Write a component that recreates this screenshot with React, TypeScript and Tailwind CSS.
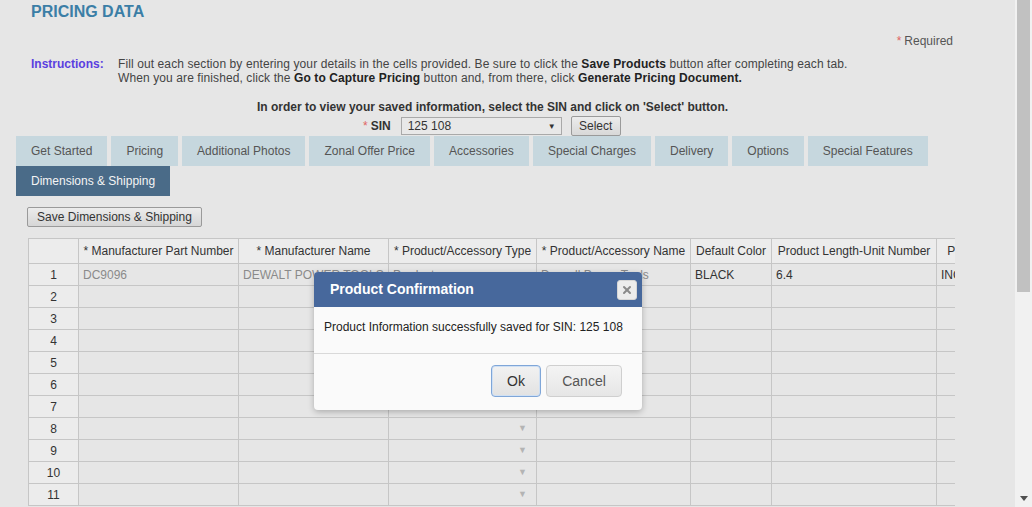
import { X } from "lucide-react";

const tabs = [
  { label: "Get Started", w: "" },
  { label: "Pricing", w: "" },
  { label: "Additional Photos", w: "" },
  { label: "Zonal Offer Price", w: "" },
  { label: "Accessories", w: "w-[95px]" },
  { label: "Special Charges", w: "" },
  { label: "Delivery", w: "" },
  { label: "Options", w: "" },
  { label: "Special Features", w: "" },
];

const headers = [
  { label: "", w: "w-[50px] min-w-[50px]" },
  { label: "* Manufacturer Part Number", w: "w-[160px] min-w-[160px]" },
  { label: "* Manufacturer Name", w: "w-[150px] min-w-[150px]" },
  { label: "* Product/Accessory Type", w: "w-[148px] min-w-[148px]" },
  { label: "* Product/Accessory Name", w: "w-[154px] min-w-[154px]" },
  { label: "Default Color", w: "w-[81px] min-w-[81px]" },
  { label: "Product Length-Unit Number", w: "w-[165px] min-w-[165px]" },
  { label: "Product Length-Unit", w: "w-[128px] min-w-[128px]" },
];

const rows = Array.from({ length: 11 }, (_, i) => i + 1);

function Arrow() {
  return <span className="absolute right-[9px] top-[6px] text-[9px] leading-none text-[#b4b4b4]">▼</span>;
}

export default function App() {
  return (
    <div className="flex h-[507px] w-[1032px] overflow-hidden bg-[#e6e6e6] font-['Liberation_Sans',Arial,sans-serif] text-[12px] text-[#333]">
      <div className="relative flex-1 overflow-hidden">
        <div className="px-4">
          <h1 className="ml-[15px] pt-[2px] text-[16px] font-bold leading-[20px] text-[#3b7ea6]">PRICING DATA</h1>

          <div className="mt-[12px] flex justify-end pr-[46px] leading-[14px] text-[#555]">
            <span className="mr-[3px] text-[#e06464]">*</span>Required
          </div>

          <div className="mt-[9px] flex leading-[14px]">
            <div className="ml-[15px] w-[87px] font-bold text-[#5a3fe0]">Instructions:</div>
            <div className="tracking-[0.1px] text-[#444]">
              <p>
                Fill out each section by entering your details in the cells provided. Be sure to click the{" "}
                <b className="text-[#222]">Save Products</b> button after completing each tab.
              </p>
              <p>
                When you are finished, click the <b className="text-[#222]">Go to Capture Pricing</b> button and, from there, click{" "}
                <b className="text-[#222]">Generate Pricing Document.</b>
              </p>
            </div>
          </div>

          <div className="mt-[15px] pr-[30px] text-center font-bold leading-[14px] text-[#333]">
            In order to view your saved information, select the SIN and click on 'Select' button.
          </div>

          <div className="mt-[2px] flex items-center pl-[347px]">
            <span className="mr-[3px] text-[#e06464]">*</span>
            <span className="mr-[10px] font-bold">SIN</span>
            <div className="relative flex h-[18px] w-[161px] items-center border border-[#a9a9a9] bg-[#e8e8e8] pl-[6px] text-[#333]">
              125 108
              <span className="absolute right-[5px] top-[3px] text-[8px] text-[#333]">▼</span>
            </div>
            <button className="ml-[9px] h-[20px] w-[50px] rounded-[2px] border border-[#9a9a9a] bg-gradient-to-b from-[#ececec] to-[#d8d8d8] text-[12px] text-[#333]">
              Select
            </button>
          </div>

          <div className="flex w-[940px] flex-wrap gap-x-[4px]">
            {tabs.map((t) => (
              <div key={t.label} className={`${t.w} flex h-[30px] items-center bg-[#c6d7de] px-[15px] text-[#555]`}>
                {t.label}
              </div>
            ))}
            <div className="flex h-[30px] items-center bg-[#4a6b88] px-[15px] text-[#f4f4f4]">Dimensions &amp; Shipping</div>
          </div>

          <button className="ml-[11px] mt-[11px] h-[20px] w-[175px] rounded-[2px] border border-[#9a9a9a] bg-gradient-to-b from-[#ececec] to-[#d6d6d6] text-[12px] text-[#333]">
            Save Dimensions &amp; Shipping
          </button>

          <div className="ml-[12px] mt-[11px] w-[927px] overflow-hidden">
            <table className="table-fixed border-collapse">
              <thead>
                <tr>
                  {headers.map((h, i) => (
                    <th
                      key={i}
                      className={`${h.w} h-[25px] whitespace-nowrap border border-[#c6c6c6] bg-[#ececec] px-[4px] text-center font-normal text-[#333]`}
                    >
                      {h.label}
                    </th>
                  ))}
                </tr>
              </thead>
              <tbody>
                {rows.map((r) => (
                  <tr key={r}>
                    <td className="h-[22px] border border-[#c6c6c6] bg-[#ececec] text-center text-[#333]">{r}</td>
                    <td className="border border-[#c6c6c6] px-[4px] text-[#8a8a8a]">{r === 1 ? "DC9096" : ""}</td>
                    <td className="whitespace-nowrap border border-[#c6c6c6] px-[4px] text-[#8a8a8a]">
                      {r === 1 ? "DEWALT POWER TOOLS" : ""}
                    </td>
                    <td className="relative border border-[#c6c6c6] px-[4px] text-[#8a8a8a]">
                      {r === 1 ? "Product" : ""}
                      {r > 1 && <Arrow />}
                    </td>
                    <td className="whitespace-nowrap border border-[#c6c6c6] px-[4px] text-[#8a8a8a]">
                      {r === 1 ? "Drywall Power Tools" : ""}
                    </td>
                    <td className="border border-[#c6c6c6] px-[4px] text-[#333]">{r === 1 ? "BLACK" : ""}</td>
                    <td className="border border-[#c6c6c6] px-[4px] text-[#333]">{r === 1 ? "6.4" : ""}</td>
                    <td className="border border-[#c6c6c6] px-[4px] text-[#333]">{r === 1 ? "INCH" : ""}</td>
                  </tr>
                ))}
              </tbody>
            </table>
          </div>
        </div>

        <div className="absolute left-[314px] top-[272px] w-[328px] overflow-hidden rounded-[4px] bg-[#fafafa] shadow-[0_2px_6px_rgba(0,0,0,0.25)]">
          <div className="flex h-[35px] items-center justify-between bg-[#47689c] pl-[16px] pr-[5px]">
            <span className="text-[14px] font-bold text-white">Product Confirmation</span>
            <div className="flex h-[20px] w-[20px] items-center justify-center rounded-[3px] border border-[#d6d6d6] bg-[#ececec]">
              <X size={12} strokeWidth={4} className="text-[#8a8a8a]" />
            </div>
          </div>
          <div className="h-[47px] border-b border-[#d9d9d9] pl-[10px] pt-[13px] text-[12px] leading-[14px] text-[#222]">
            Product Information successfully saved for SIN: 125 108
          </div>
          <div className="flex h-[56px] items-start justify-end gap-[5px] pr-[20px] pt-[11px]">
            <button className="h-[32px] w-[50px] rounded-[4px] border border-[#7fa6d8] bg-gradient-to-b from-[#f2f2f2] to-[#e2e2e2] text-[14px] text-[#333] shadow-[inset_0_0_0_1px_#cfe0f4]">
              Ok
            </button>
            <button className="h-[32px] w-[76px] rounded-[4px] border border-[#cfcfcf] bg-gradient-to-b from-[#f4f4f4] to-[#e6e6e6] text-[14px] text-[#555]">
              Cancel
            </button>
          </div>
        </div>
      </div>

      <div className="flex w-[17px] flex-col bg-[#f1f1f1]">
        <div className="mx-[2px] h-[292px] bg-[#c1c1c1]" />
        <div className="flex-1" />
        <div className="flex h-[17px] items-center justify-center">
          <svg width="8" height="5" viewBox="0 0 8 5">
            <path d="M0 0h8L4 5z" fill="#505050" />
          </svg>
        </div>
      </div>
    </div>
  );
}
